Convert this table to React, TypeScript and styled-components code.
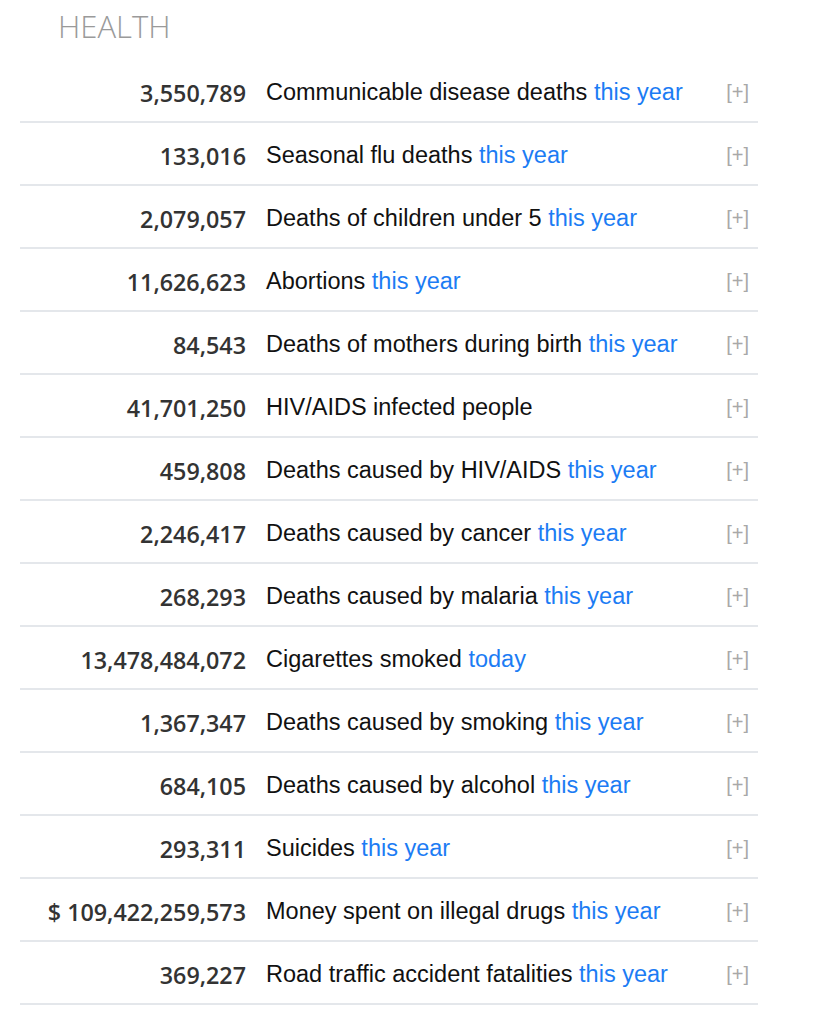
import React from "react";
import styled, { createGlobalStyle } from "styled-components";

const Global = createGlobalStyle`
  html, body { margin: 0; padding: 0; background: #fff; }
  body { font-family: "Liberation Sans", Arial, sans-serif; }
`;

const Page = styled.div`
  width: 822px;
  padding: 0 0 0 20px;
  box-sizing: border-box;
`;

const Title = styled.h2`
  margin: 0;
  height: 60px;
  box-sizing: border-box;
  padding: 8px 0 0 38px;
  font-family: "Open Sans", sans-serif;
  font-weight: 300;
  font-size: 31px;
  line-height: 36px;
  color: #9a9a9a;
`;

const List = styled.div`
  width: 738px;
  display: flex;
  flex-direction: column;
`;

const Row = styled.div`
  display: flex;
  align-items: center;
  height: 63px;
  box-sizing: border-box;
  border-bottom: 2px solid #e4e7eb;
  padding-top: 4px;
`;

const Num = styled.span`
  width: 226px;
  flex: none;
  text-align: right;
  font-family: "Open Sans", sans-serif;
  font-weight: 600;
  font-size: 23.3px;
  color: #333;
  white-space: nowrap;
`;

const Label = styled.span`
  flex: 1;
  padding-left: 20px;
  font-family: "Liberation Sans", Arial, sans-serif;
  font-size: 23.5px;
  color: #111;
  white-space: nowrap;
`;

const Period = styled.span`
  color: #1c7cf4;
`;

const Expand = styled.span`
  flex: none;
  margin-right: 9px;
  font-family: "Liberation Sans", Arial, sans-serif;
  font-size: 20px;
  color: #a8a8a8;
`;

type Item = { n: string; t: string; p?: string };

const items: Item[] = [
  { n: "3,550,789", t: "Communicable disease deaths", p: "this year" },
  { n: "133,016", t: "Seasonal flu deaths", p: "this year" },
  { n: "2,079,057", t: "Deaths of children under 5", p: "this year" },
  { n: "11,626,623", t: "Abortions", p: "this year" },
  { n: "84,543", t: "Deaths of mothers during birth", p: "this year" },
  { n: "41,701,250", t: "HIV/AIDS infected people" },
  { n: "459,808", t: "Deaths caused by HIV/AIDS", p: "this year" },
  { n: "2,246,417", t: "Deaths caused by cancer", p: "this year" },
  { n: "268,293", t: "Deaths caused by malaria", p: "this year" },
  { n: "13,478,484,072", t: "Cigarettes smoked", p: "today" },
  { n: "1,367,347", t: "Deaths caused by smoking", p: "this year" },
  { n: "684,105", t: "Deaths caused by alcohol", p: "this year" },
  { n: "293,311", t: "Suicides", p: "this year" },
  { n: "$ 109,422,259,573", t: "Money spent on illegal drugs", p: "this year" },
  { n: "369,227", t: "Road traffic accident fatalities", p: "this year" },
];

export default function App() {
  return (
    <Page>
      <Global />
      <Title>HEALTH</Title>
      <List>
        {items.map((it) => (
          <Row key={it.t}>
            <Num>{it.n}</Num>
            <Label>
              {it.t}
              {it.p && <Period> {it.p}</Period>}
            </Label>
            <Expand>[+]</Expand>
          </Row>
        ))}
      </List>
    </Page>
  );
}
